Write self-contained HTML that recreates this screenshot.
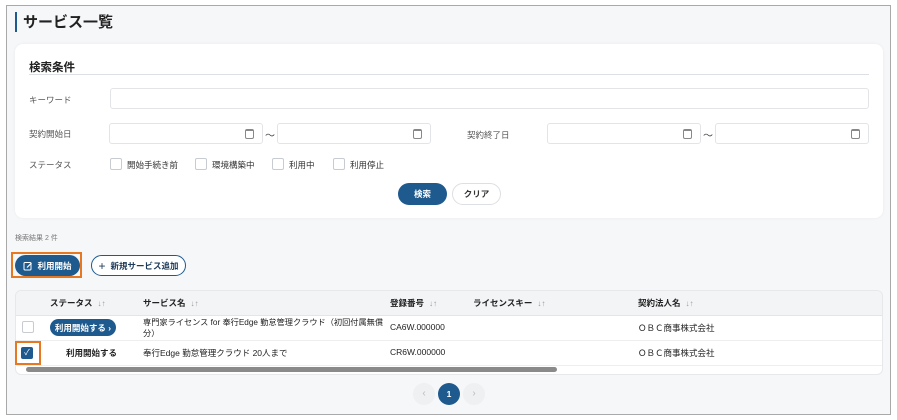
<!DOCTYPE html>
<html><head><meta charset="utf-8"><style>
*{box-sizing:border-box;margin:0;padding:0}
body{width:897px;height:420px;background:#fff;font-family:"Liberation Sans","Noto Sans CJK JP",sans-serif;color:#222;position:relative;overflow:hidden}
.a{position:absolute}
.frame{left:6px;top:5px;width:885px;height:410px;border:1px solid #a9a9a9;background:#f6f7f9}
.lbl{font-size:8.5px;color:#555}
.inp{background:#fff;border:1px solid #e2e4e8;border-radius:3px;height:21px}
.cb{width:12px;height:12px;border:1px solid #c8ccd2;border-radius:2px;background:#fff}
.cal{position:absolute;right:8px;top:5px;width:9px;height:10px;border:1.3px solid #888;border-radius:2px;border-top-width:2.5px}
.btn{border-radius:11px;font-size:8.5px;font-weight:bold;display:flex;align-items:center;justify-content:center}
.th{font-size:8.5px;font-weight:bold;top:297px}
.td{font-size:8.5px}
.s{color:#999;font-weight:normal;font-size:8px;margin-left:5px}
</style></head><body>
<div class="a frame"></div>
<div class="a" style="left:15px;top:12px;width:2px;height:20px;background:#1e5a8e"></div>
<div class="a" style="left:23px;top:13px;font-size:15px;font-weight:bold;line-height:20px">サービス一覧</div>
<div class="a" style="left:15px;top:44px;width:868px;height:174px;background:#fff;border-radius:8px;box-shadow:0 0 3px rgba(0,0,0,.06)"></div>
<div class="a" style="left:29px;top:59px;font-size:11.5px;font-weight:bold">検索条件</div>
<div class="a" style="left:29px;top:74px;width:840px;height:1px;background:#dcdfe3"></div>
<div class="a lbl" style="left:29px;top:94px">キーワード</div>
<div class="a inp" style="left:110px;top:88px;width:759px"></div>
<div class="a lbl" style="left:29px;top:128px">契約開始日</div>
<div class="a inp" style="left:109px;top:123px;width:154px"><div class="cal"></div></div>
<div class="a" style="left:265px;top:127px;font-size:10px;color:#444">～</div>
<div class="a inp" style="left:277px;top:123px;width:154px"><div class="cal"></div></div>
<div class="a lbl" style="left:467px;top:129px">契約終了日</div>
<div class="a inp" style="left:547px;top:123px;width:154px"><div class="cal"></div></div>
<div class="a" style="left:703px;top:127px;font-size:10px;color:#444">～</div>
<div class="a inp" style="left:715px;top:123px;width:154px"><div class="cal"></div></div>
<div class="a lbl" style="left:29px;top:159px">ステータス</div>
<div class="a cb" style="left:110px;top:158px"></div><div class="a lbl" style="left:127px;top:159px;color:#333">開始手続き前</div>
<div class="a cb" style="left:195px;top:158px"></div><div class="a lbl" style="left:212px;top:159px;color:#333">環境構築中</div>
<div class="a cb" style="left:272px;top:158px"></div><div class="a lbl" style="left:289px;top:159px;color:#333">利用中</div>
<div class="a cb" style="left:333px;top:158px"></div><div class="a lbl" style="left:350px;top:159px;color:#333">利用停止</div>
<div class="a btn" style="left:398px;top:183px;width:49px;height:22px;background:#1e5a8e;color:#fff">検索</div>
<div class="a btn" style="left:452px;top:183px;width:49px;height:22px;background:#fff;border:1px solid #dcdfe3;color:#333">クリア</div>
<div class="a" style="left:15px;top:233px;font-size:7px;color:#777">検索結果 2 件</div>
<div class="a" style="left:11px;top:252px;width:71px;height:26px;border:2px solid #e87722"></div>
<div class="a btn" style="left:15px;top:255px;width:65px;height:21px;background:#1e5a8e;color:#fff"><svg width="10" height="10" viewBox="0 0 10 10" style="margin-right:4px"><rect x="1" y="1.5" width="7" height="7.5" rx="1" fill="none" stroke="#fff" stroke-width="1"/><path d="M4 6.5L8.5 2" stroke="#fff" stroke-width="1.2"/></svg>利用開始</div>
<div class="a btn" style="left:91px;top:255px;width:95px;height:21px;background:#fff;border:1px solid #1e5a8e;color:#1e3a5a"><span style="font-size:12px;font-weight:normal;margin-right:5px">+</span>新規サービス追加</div>
<div class="a" style="left:15px;top:290px;width:868px;height:85px;background:#fff;border-radius:6px;border:1px solid #e6e8eb;overflow:hidden">
<div style="height:25px;background:#f3f4f6;border-bottom:1px solid #e3e5e8"></div>
<div style="height:25px;border-bottom:1px solid #eceef0"></div>
<div style="height:25px;border-bottom:1px solid #eceef0"></div>
<div style="position:absolute;left:10px;top:76px;width:531px;height:5px;background:#8a8a8a;border-radius:3px"></div>
</div>
<div class="a th" style="left:50px">ステータス<span class="s">↓↑</span></div>
<div class="a th" style="left:143px">サービス名<span class="s">↓↑</span></div>
<div class="a th" style="left:390px">登録番号<span class="s">↓↑</span></div>
<div class="a th" style="left:473px">ライセンスキー<span class="s">↓↑</span></div>
<div class="a th" style="left:638px">契約法人名<span class="s">↓↑</span></div>
<div class="a cb" style="left:22px;top:321px"></div>
<div class="a btn" style="left:50px;top:319px;width:66px;height:17px;background:#1e5a8e;color:#fff">利用開始する ›</div>
<div class="a td" style="left:143px;top:317px;line-height:11px;white-space:nowrap;font-size:8.2px">専門家ライセンス for 奉行Edge 勤怠管理クラウド（初回付属無償<br>分）</div>
<div class="a td" style="left:390px;top:322px">CA6W.000000</div>
<div class="a td" style="left:638px;top:322px">ＯＢＣ商事株式会社</div>
<div class="a" style="left:15px;top:341px;width:26px;height:24px;border:2px solid #e87722"></div>
<div class="a" style="left:21px;top:347px;width:12px;height:12px;background:#1e5a8e;border-radius:2px;color:#fff;font-size:8px;text-align:center;line-height:12px">✓</div>
<div class="a td" style="left:66px;top:347px;font-weight:bold">利用開始する</div>
<div class="a td" style="left:143px;top:347px">奉行Edge 勤怠管理クラウド 20人まで</div>
<div class="a td" style="left:390px;top:347px">CR6W.000000</div>
<div class="a td" style="left:638px;top:347px">ＯＢＣ商事株式会社</div>
<div class="a" style="left:413px;top:383px;width:22px;height:22px;border-radius:50%;background:#eef0f2;color:#bbb;font-size:10px;text-align:center;line-height:22px">‹</div>
<div class="a" style="left:438px;top:383px;width:22px;height:22px;border-radius:50%;background:#1e5a8e;color:#fff;font-size:8.5px;font-weight:bold;text-align:center;line-height:22px">1</div>
<div class="a" style="left:463px;top:383px;width:22px;height:22px;border-radius:50%;background:#eef0f2;color:#bbb;font-size:10px;text-align:center;line-height:22px">›</div>
</body></html>
